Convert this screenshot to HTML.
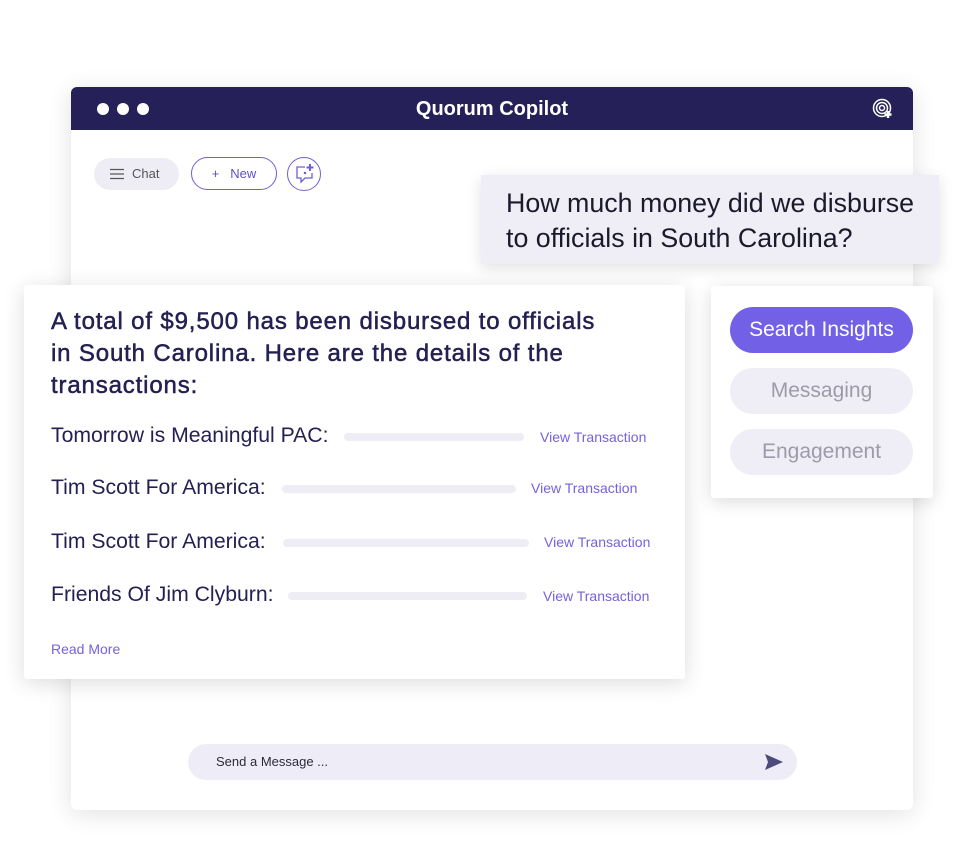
<!DOCTYPE html>
<html><head><style>
*{margin:0;padding:0;box-sizing:border-box}
body{width:960px;height:861px;background:#fff;position:relative;overflow:hidden;font-family:"Liberation Sans",sans-serif}
.win{position:absolute;left:71px;top:87px;width:842px;height:723px;background:#fff;border-radius:6px;box-shadow:0 4px 24px rgba(0,0,0,.12)}
.hdr{position:absolute;left:0;top:0;width:842px;height:43px;background:#252057;border-radius:6px 6px 0 0}
.dot{position:absolute;top:16px;width:12px;height:12px;border-radius:50%;background:#fff}
.title{position:absolute;left:0;width:842px;top:11px;text-align:center;color:#fff;font-size:20px;font-weight:bold}
.abs{position:absolute}
.q{left:481px;top:175px;width:458px;height:89px;background:#efeef7;box-shadow:0 4px 14px rgba(0,0,0,.12);font-size:26.8px;color:#1a1a2a;padding:11px 0 0 25px;line-height:35px}
.ans{left:24px;top:285px;width:661px;height:394px;background:#fff;box-shadow:0 4px 22px rgba(0,0,0,.14);border-radius:3px}
.h{left:27px;top:21px;font-size:24px;line-height:32px;color:#242052;-webkit-text-stroke:0.5px #242052;letter-spacing:0.85px;white-space:nowrap}
.row{font-size:21.2px;color:#242052}
.bar{height:8px;background:#eeedf5;border-radius:4px}
.vt{font-size:14px;color:#7462dc}
.side{left:711px;top:286px;width:222px;height:212px;background:#fff;box-shadow:0 4px 18px rgba(0,0,0,.14);border-radius:3px}
.pill{position:absolute;left:19px;width:183px;height:46px;border-radius:23px;text-align:center;line-height:46px;font-size:21px}
</style></head><body>
<div class="win">
 <div class="hdr">
  <div class="dot" style="left:26px"></div><div class="dot" style="left:46px"></div><div class="dot" style="left:66px"></div>
  <div class="title">Quorum Copilot</div>
  <svg class="abs" style="left:801px;top:11px" width="22" height="22" viewBox="0 0 22 22" fill="none" stroke="#fff" stroke-width="1.5"><circle cx="10" cy="10" r="8.5"/><circle cx="10" cy="10" r="5.5"/><circle cx="10" cy="10" r="2.5"/><path d="M16 13v7M12.5 16.5h7" stroke-width="2.5"/></svg>
 </div>
 <div class="abs" style="left:23px;top:71px;width:85px;height:32px;border-radius:16px;background:#eeedf5;font-size:13px;color:#555;line-height:32px;padding-left:38px">Chat</div>
 <svg class="abs" style="left:38px;top:81px" width="16" height="12"><path d="M1 1.5h14M1 6h14M1 10.5h14" stroke="#555" stroke-width="1.3"/></svg>
 <div class="abs" style="left:120px;top:70px;width:86px;height:33px;border-radius:17px;border:1.3px solid #6e5fd6;font-size:13px;color:#5e52c4;line-height:31px;text-align:center">+&nbsp;&nbsp; New</div>
 <div class="abs" style="left:216px;top:70px;width:34px;height:34px;border-radius:50%;border:1.3px solid #6e5fd6"></div>
 <svg class="abs" style="left:223px;top:76px" width="22" height="22" viewBox="0 0 22 22" fill="none" stroke="#6e5fd6" stroke-width="1.3"><path d="M11 4H3v11h4v4l4-4h7v-5"/><path d="M16 1v7M12.5 4.5h7" stroke-width="2"/><circle cx="11" cy="10" r=".6" fill="#6e5fd6"/></svg>
 <div class="abs" style="left:117px;top:657px;width:609px;height:36px;border-radius:18px;background:#eeedf7;font-size:13px;color:#2a2a3a;line-height:36px;padding-left:28px">Send a Message ...</div>
 <svg class="abs" style="left:693px;top:666px" width="20" height="18" viewBox="0 0 20 18"><path d="M1 1L19 9L1 17L4 9Z" fill="#4d4a7e"/></svg>
</div>
<div class="abs q">How much money did we disburse<br>to officials in South Carolina?</div>
<div class="abs ans">
 <div class="abs h">A total of $9,500 has been disbursed to officials<br>in South Carolina. Here are the details of the<br>transactions:</div>
 <div class="abs row" style="left:27px;top:139px">Tomorrow is Meaningful PAC:</div>
 <div class="abs bar" style="left:320px;top:148px;width:180px"></div>
 <div class="abs vt" style="left:516px;top:144px">View Transaction</div>
 <div class="abs row" style="left:27px;top:191px">Tim Scott For America:</div>
 <div class="abs bar" style="left:258px;top:200px;width:234px"></div>
 <div class="abs vt" style="left:507px;top:195px">View Transaction</div>
 <div class="abs row" style="left:27px;top:245px">Tim Scott For America:</div>
 <div class="abs bar" style="left:259px;top:254px;width:246px"></div>
 <div class="abs vt" style="left:520px;top:249px">View Transaction</div>
 <div class="abs row" style="left:27px;top:298px">Friends Of Jim Clyburn:</div>
 <div class="abs bar" style="left:264px;top:307px;width:239px"></div>
 <div class="abs vt" style="left:519px;top:303px">View Transaction</div>
 <div class="abs vt" style="left:27px;top:356px">Read More</div>
</div>
<div class="abs side">
 <div class="pill" style="top:21px;background:#7261e6;color:#fff">Search Insights</div>
 <div class="pill" style="top:82px;background:#efeef6;color:#9d9ba9">Messaging</div>
 <div class="pill" style="top:143px;background:#efeef6;color:#9d9ba9">Engagement</div>
</div>
</body></html>
